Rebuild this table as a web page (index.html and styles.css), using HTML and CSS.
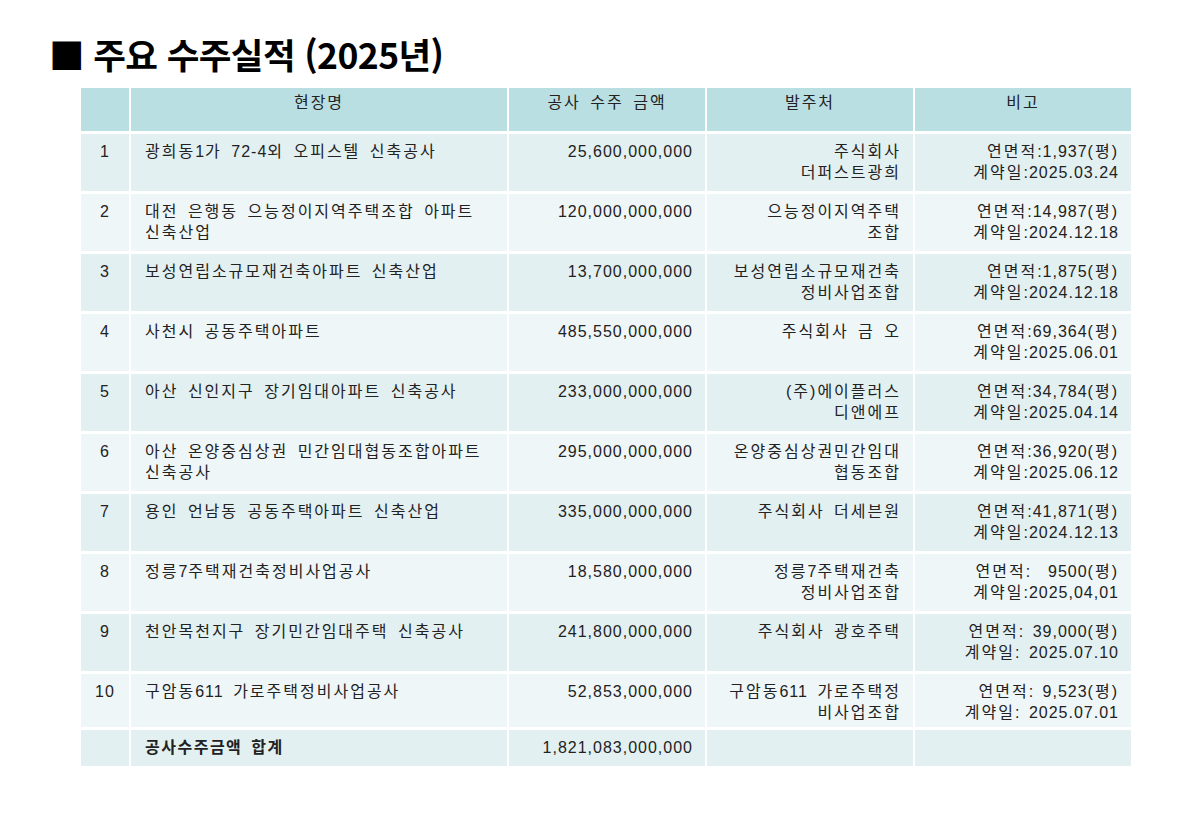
FILE: index.html
```html
<!DOCTYPE html>
<html lang="ko">
<head>
<meta charset="utf-8">
<title>주요 수주실적 (2025년)</title>
<link rel="stylesheet" href="styles.css">
</head>
<body>
<div class="page">
  <h1 class="title">■ 주요 수주실적 (2025년)</h1>
  <table class="orders">
    <colgroup>
      <col class="c-no"><col class="c-site"><col class="c-amt"><col class="c-client"><col class="c-note">
    </colgroup>
    <thead>
      <tr><th></th><th>현장명</th><th>공사 수주 금액</th><th>발주처</th><th>비고</th></tr>
    </thead>
    <tbody>
      <tr class="odd"><td class="no">1</td><td class="site">광희동<span class="n">1</span>가 <span class="n">72-4</span>외 오피스텔 신축공사</td><td class="amt">25,600,000,000</td><td class="num">주식회사<br>더퍼스트광희</td><td class="num">연면적<span class="n">:1,937</span>(평)<br>계약일<span class="n">:2025.03.24</span></td></tr>
      <tr class="even"><td class="no">2</td><td class="site">대전 은행동 으능정이지역주택조합 아파트<br>신축산업</td><td class="amt">120,000,000,000</td><td class="num">으능정이지역주택<br>조합</td><td class="num">연면적<span class="n">:14,987</span>(평)<br>계약일<span class="n">:2024.12.18</span></td></tr>
      <tr class="odd"><td class="no">3</td><td class="site">보성연립소규모재건축아파트 신축산업</td><td class="amt">13,700,000,000</td><td class="num">보성연립소규모재건축<br>정비사업조합</td><td class="num">연면적<span class="n">:1,875</span>(평)<br>계약일<span class="n">:2024.12.18</span></td></tr>
      <tr class="even"><td class="no">4</td><td class="site">사천시 공동주택아파트</td><td class="amt">485,550,000,000</td><td class="num">주식회사 금 오</td><td class="num">연면적<span class="n">:69,364</span>(평)<br>계약일<span class="n">:2025.06.01</span></td></tr>
      <tr class="odd"><td class="no">5</td><td class="site">아산 신인지구 장기임대아파트 신축공사</td><td class="amt">233,000,000,000</td><td class="num">(주)에이플러스<br>디앤에프</td><td class="num">연면적<span class="n">:34,784</span>(평)<br>계약일<span class="n">:2025.04.14</span></td></tr>
      <tr class="even"><td class="no">6</td><td class="site">아산 온양중심상권 민간임대협동조합아파트<br>신축공사</td><td class="amt">295,000,000,000</td><td class="num">온양중심상권민간임대<br>협동조합</td><td class="num">연면적<span class="n">:36,920</span>(평)<br>계약일<span class="n">:2025.06.12</span></td></tr>
      <tr class="odd"><td class="no">7</td><td class="site">용인 언남동 공동주택아파트 신축산업</td><td class="amt">335,000,000,000</td><td class="num">주식회사 더세븐원</td><td class="num">연면적<span class="n">:41,871</span>(평)<br>계약일<span class="n">:2024.12.13</span></td></tr>
      <tr class="even"><td class="no">8</td><td class="site">정릉<span class="n">7</span>주택재건축정비사업공사</td><td class="amt">18,580,000,000</td><td class="num">정릉<span class="n">7</span>주택재건축<br>정비사업조합</td><td class="num">연면적<span class="n">:&nbsp; 9500</span>(평)<br>계약일<span class="n">:2025,04,01</span></td></tr>
      <tr class="odd"><td class="no">9</td><td class="site">천안목천지구 장기민간임대주택 신축공사</td><td class="amt">241,800,000,000</td><td class="num">주식회사 광호주택</td><td class="num">연면적<span class="n">: 39,000</span>(평)<br>계약일<span class="n">: 2025.07.10</span></td></tr>
      <tr class="even short"><td class="no">10</td><td class="site">구암동<span class="n">611</span> 가로주택정비사업공사</td><td class="amt">52,853,000,000</td><td class="num">구암동<span class="n">611</span> 가로주택정<br>비사업조합</td><td class="num">연면적<span class="n">: 9,523</span>(평)<br>계약일<span class="n">: 2025.07.01</span></td></tr>
      <tr class="total"><td class="no"></td><td class="site">공사수주금액 합계</td><td class="amt">1,821,083,000,000</td><td></td><td></td></tr>
    </tbody>
  </table>
</div>
</body>
</html>
```

FILE: styles.css
```css
html, body {
  margin: 0;
  padding: 0;
  background: #ffffff;
}

.page {
  width: 1200px;
  height: 825px;
  box-sizing: border-box;
  padding: 30px 0 0 49px;
}

.title {
  margin: 0;
  font-family: "Noto Sans CJK KR", "Noto Sans", sans-serif;
  font-weight: 700;
  font-size: 35.5px;
  line-height: 48px;
  color: #000000;
  letter-spacing: -0.6px;
}

.orders {
  margin: 7px 0 0 30px;
  border-collapse: separate;
  border-spacing: 2px 3px;
  width: 1054px;
  table-layout: fixed;
  font-family: "Liberation Sans", "Noto Sans CJK KR", sans-serif;
  font-size: 16px;
  letter-spacing: 2px;
  word-spacing: 3px;
  color: #222222;
}

.c-no { width: 48px; }
.c-site { width: 376px; }
.c-amt { width: 196px; }
.c-client { width: 206px; }
.c-note { width: 216px; }

.orders th {
  background: #b9dfe3;
  height: 43px;
  box-sizing: border-box;
  padding: 4px 0 0 0;
  vertical-align: top;
  font-weight: 400;
  line-height: 21px;
  text-align: center;
}

.orders td {
  height: 57px;
  box-sizing: border-box;
  padding: 7px 12px 0 12px;
  vertical-align: top;
  line-height: 21px;
}

.orders tr.short td { height: 53px; }

.orders tr.odd td { background: #e3f0f2; }
.orders tr.even td { background: #eff6f8; }
.orders tr.total td {
  background: #e3f0f2;
  height: 36px;
}

.orders td.no { text-align: center; padding-left: 0; padding-right: 0; letter-spacing: 1px; }
.orders td.site { text-align: left; padding-left: 14px; }
.orders td.num { text-align: right; white-space: nowrap; }
.orders td.amt { text-align: right; white-space: nowrap; letter-spacing: 1px; }
.orders tr.total td.site { font-weight: 700; letter-spacing: 1.5px; }

.n { letter-spacing: 1px; }
```
